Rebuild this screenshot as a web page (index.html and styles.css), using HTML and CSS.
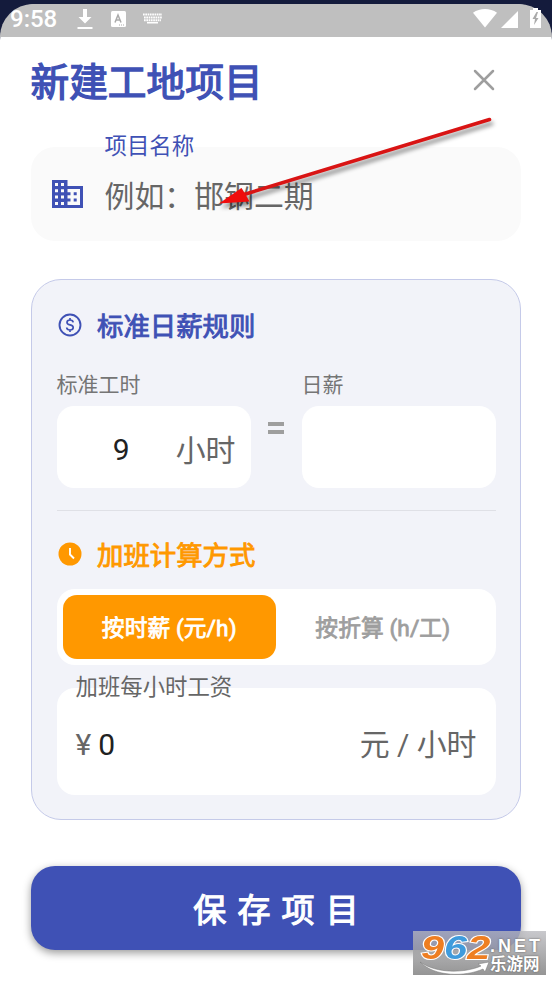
FILE: index.html
```html
<!DOCTYPE html>
<html lang="zh-CN">
<head>
<meta charset="utf-8">
<title>新建工地项目</title>
<link rel="stylesheet" href="styles.css">
</head>
<body>
<div class="screen">
  <div class="sheet">
    <div class="status">
      <span class="clock">9:58</span>
      <svg class="st-download" width="16" height="22" viewBox="0 0 16 22"><path fill="#fff" d="M6 0h4v8h4.500L8 14.500 1.500 8H6zM0.500 18h15v2H.5z"/></svg>
      <svg class="st-lang" width="15" height="16" viewBox="0 0 15 16"><rect width="15" height="16" rx="1.500" fill="#fff"/><path d="M4 11.500 7 4l3 7.500M5 9h4" fill="none" stroke="#aaa" stroke-width="1.500"/><path d="M8 14h5" stroke="#aaa" stroke-dasharray="1 1"/></svg>
      <svg class="st-keys" width="19" height="11" viewBox="0 0 19 11"><path d="M0 1.500h19M1 4.500h18M1 7.300h17" stroke="#fff" stroke-width="2" stroke-dasharray="1.700 .6"/><path d="M4 9.700h11" stroke="#fff" stroke-width="1.600"/></svg>
      <span class="grow"></span>
      <svg class="st-wifi" width="24" height="19" viewBox="0 0 24 19"><path fill="#fff" d="M0 3.800C7-1.200 17-1.200 24 3.800L12 18.500z"/></svg>
      <svg class="st-signal" width="17" height="17" viewBox="0 0 17 17"><path fill="#fff" d="M17 0v17H0z"/></svg>
      <svg class="st-battery" width="11" height="20" viewBox="0 0 11 20"><path fill="#fff" d="M3 0h5v2h3v18H0V2h3z"/><path fill="#aaa" d="M6.500 4 2.500 11h2.500L4 17l4.500-7H6L8 4z"/></svg>
    </div>

    <div class="header">
      <h1>新建工地项目</h1>
      <svg class="close" width="22" height="22" viewBox="0 0 22 22"><path d="M2 2 20 20M20 2 2 20" stroke="#9e9e9e" stroke-width="2.500" stroke-linecap="round"/></svg>
    </div>

    <div class="name-field">
      <svg class="building" width="31" height="28" viewBox="0 0 31 28"><path fill="#3f51b5" fill-rule="evenodd" d="M0 0h15.500v6H31v22H0zM3 3v3h3V3zM9 3v3h3V3zM3 9.300v3h3v-3zM9 9.300v3h3v-3zM3 15.600v3h3v-3zM9 15.600v3h3v-3zM3 22v3h3v-3zM9 22v3h3v-3zM15.500 9v3.300h3v3h-3v3.300h3v3h-3V25H28V9z"/><path fill="#3f51b5" d="M21.700 12.300h3v3h-3zM21.700 18.600h3v3h-3z"/></svg>
      <div class="name-text">
        <label>项目名称</label>
        <span class="placeholder">例如：邯钢二期</span>
      </div>
    </div>

    <div class="card">
      <div class="section blue">
        <svg width="24" height="24" viewBox="0 0 24 24"><circle cx="12" cy="12" r="10.500" fill="none" stroke="#3f51b5" stroke-width="1.900"/><path d="M15.200 9.300C15 7.700 13.700 7 12 7S9 7.900 9 9.400c0 1.700 1.500 2.100 3 2.500s3.200.8 3.200 2.700c0 1.500-1.400 2.400-3.200 2.400s-3.200-.9-3.300-2.500M12 5v2.200M12 16.800V19" fill="none" stroke="#3f51b5" stroke-width="1.700"/></svg>
        <h2>标准日薪规则</h2>
      </div>

      <div class="rule-row">
        <div class="col">
          <label>标准工时</label>
          <div class="box"><span class="num">9</span><span class="unit">小时</span></div>
        </div>
        <div class="equals"><i></i><i></i></div>
        <div class="col">
          <label>日薪</label>
          <div class="box"></div>
        </div>
      </div>

      <div class="divider"></div>

      <div class="section orange">
        <svg width="24" height="24" viewBox="0 0 24 24"><circle cx="12" cy="12" r="11.500" fill="#ff9800"/><path d="M12 6v6.500l4 4" fill="none" stroke="#fff" stroke-width="1.900"/></svg>
        <h2>加班计算方式</h2>
      </div>

      <div class="segmented">
        <div class="seg active">按时薪 (元/h)</div>
        <div class="seg">按折算 (h/工)</div>
      </div>

      <div class="wage">
        <label>加班每小时工资</label>
        <div class="wage-row">
          <span class="yen">¥</span><span class="amount">0</span>
          <span class="grow"></span>
          <span class="unit">元 / 小时</span>
        </div>
      </div>
    </div>

    <div class="save">保存项目</div>
  </div>

  <svg class="arrow" width="290" height="100" viewBox="210 110 290 100"><path d="M489.500 119.500 244 194.500" stroke="#d91414" stroke-width="3.600" stroke-linecap="round"/><path fill="#f00c0c" d="M219 203.500 241.500 188 245.500 194.500 249.500 201.500z"/></svg>

  <div class="watermark">
    <svg class="swoosh" width="133" height="44" viewBox="0 0 133 44"><path d="M7 31C24 43 52 42 68 35l-3-2 11-2-4 10-2-3C52 46 22 46 7 31z" fill="#fff" stroke="#777" stroke-width=".5"/></svg>
    <div class="wm-digits"><span class="o">9</span><span class="b">6</span><span class="o">2</span></div>
    <div class="wm-right"><span class="wm-net">.NET</span><span class="wm-cn">乐游网</span></div>
  </div>
</div>
</body>
</html>
```

FILE: styles.css
```css
* { box-sizing: border-box; }
body {
  margin: 0;
  font-family: Roboto, "Noto Sans CJK SC", sans-serif;
  background: #141b3c;
}
h1, h2 {
  margin: 0;
  font-weight: 400;
  -webkit-text-stroke: .035em currentColor;
}
label { display: block; white-space: nowrap; }
svg { display: block; flex: none; }
.grow { flex: 1; }

.screen {
  position: relative;
  width: 552px;
  height: 981px;
  padding-top: 4px;
  overflow: hidden;
  background: #141b3c;
}
.sheet {
  height: 977px;
  background: #fff;
  border-radius: 36px 36px 0 0;
}
.status {
  display: flex;
  align-items: flex-start;
  height: 33px;
  padding: 0 10px;
  background: #bfbfbf;
  border-radius: 36px 36px 0 0;
}
.clock {
  width: 67px;
  font-size: 24px;
  line-height: 31px;
  font-weight: 500;
  color: #fff;
}
.st-download { margin-top: 5px; }
.st-lang { margin: 7px 0 0 18px; }
.st-keys { margin: 9px 0 0 17px; }
.st-wifi { margin: 5px 4px 0 0; }
.st-signal { margin-top: 7px; }
.st-battery { margin: 4px 1px 0 12px; }

.header {
  display: flex;
  align-items: center;
  justify-content: space-between;
  height: 88px;
  padding: 0 57px 0 30.500px;
}
.header h1 {
  padding-top: 4px;
  font-size: 38.700px;
  line-height: 56px;
  color: #3f51b5;
}
.close { margin-top: -3px; }

.name-field {
  display: flex;
  height: 94px;
  margin: 22px 31px 0;
  padding-left: 21px;
  border-radius: 24px;
  background: #fafafa;
}
.building { margin-top: 33px; }
.name-text { margin: -14px 0 0 21.500px; }
.name-text label {
  font-size: 22.400px;
  line-height: 26px;
  color: #3f51b5;
}
.placeholder {
  display: block;
  margin-top: 18px;
  font-size: 29.900px;
  line-height: 40px;
  color: #666;
}

.card {
  height: 541px;
  margin: 38px 31px 0;
  padding: 0 24.500px;
  border: 1.500px solid #c5cae9;
  border-radius: 30px;
  background: #f2f3f9;
}
.section {
  display: flex;
  align-items: center;
  gap: 15px;
  height: 34px;
  padding-left: 1.500px;
}
.section h2 { padding-top: 3px; font-size: 26.400px; line-height: 34px; }
.blue { margin-top: 28px; color: #3f51b5; }
.orange { margin-top: 26px; color: #ff9800; }

.rule-row { display: flex; margin-top: 30px; }
.col { width: 194px; }
.col label {
  font-size: 21px;
  line-height: 26px;
  color: #757575;
}
.box {
  display: flex;
  align-items: center;
  height: 82px;
  margin-top: 8px;
  padding: 5px 15px 0 0;
  border-radius: 17px;
  background: #fff;
}
.num {
  flex: 1;
  padding-left: 10px;
  text-align: center;
  font-size: 30px;
  color: #212121;
}
.unit { margin-top: -4px; font-size: 29.900px; color: #666; }
.equals {
  display: flex;
  flex-direction: column;
  gap: 4px;
  width: 51px;
  padding-top: 50px;
  align-items: center;
}
.equals i { width: 16px; height: 4px; background: #9e9e9e; }
.divider { height: 1px; margin-top: 22px; background: #dfe0e6; }

.segmented {
  display: flex;
  height: 76px;
  margin-top: 18px;
  padding: 6px;
  border-radius: 18px;
  background: #fff;
}
.seg {
  flex: 1;
  border-radius: 14px;
  text-align: center;
  font-size: 22.700px;
  line-height: 68px;
  font-weight: 400;
  -webkit-text-stroke: .8px currentColor;
  letter-spacing: .1px;
  color: #9e9e9e;
}
.active { background: #ff9800; color: #fff; }

.wage {
  height: 107px;
  margin-top: 23px;
  padding: 0 19px;
  border-radius: 18px;
  background: #fff;
}
.wage label {
  position: relative;
  top: -14px;
  font-size: 22.400px;
  line-height: 26px;
  color: #666;
}
.wage-row {
  display: flex;
  align-items: center;
  height: 40px;
  margin-top: 10px;
  font-size: 30px;
}
.yen { color: #666; }
.amount { margin-left: 7px; color: #212121; }

.save {
  height: 84px;
  margin: 46px 31px 0;
  padding-left: 11.200px;
  border-radius: 24px;
  background: #3f51b5;
  box-shadow: 0 3px 8px rgba(0, 0, 0, .4);
  text-align: center;
  font-size: 33px;
  line-height: 90px;
  letter-spacing: 11.200px;
  font-weight: 400;
  -webkit-text-stroke: .035em currentColor;
  color: #fff;
}

.arrow {
  position: absolute;
  left: 210px;
  top: 110px;
  filter: drop-shadow(2px 4px 2px rgba(0, 0, 0, .45));
}

.watermark {
  position: absolute;
  left: 413px;
  top: 931px;
  display: flex;
  width: 133px;
  height: 44px;
  background: linear-gradient(rgba(185, 185, 190, .78), rgba(140, 140, 140, .92));
}
.swoosh { position: absolute; left: 0; top: 0; }
.wm-digits {
  width: 77px;
  padding-left: 8px;
  font: italic 700 34px/32px "Liberation Sans", sans-serif;
  white-space: nowrap;
  transform: scaleX(1.220);
  transform-origin: 8px 50%;
  -webkit-text-stroke: 2px #fff;
  paint-order: stroke fill;
}
.o { color: #ee7e22; }
.b { color: #3f9bdc; }
.wm-right { color: #fff; text-shadow: 0 0 2px #555; }
.wm-net {
  display: block;
  height: 24px;
  font: 700 18px/31px "Liberation Sans", sans-serif;
  letter-spacing: 3px;
}
.wm-cn {
  display: block;
  font-size: 16.500px;
  line-height: 20px;
  font-weight: 700;
}
```
